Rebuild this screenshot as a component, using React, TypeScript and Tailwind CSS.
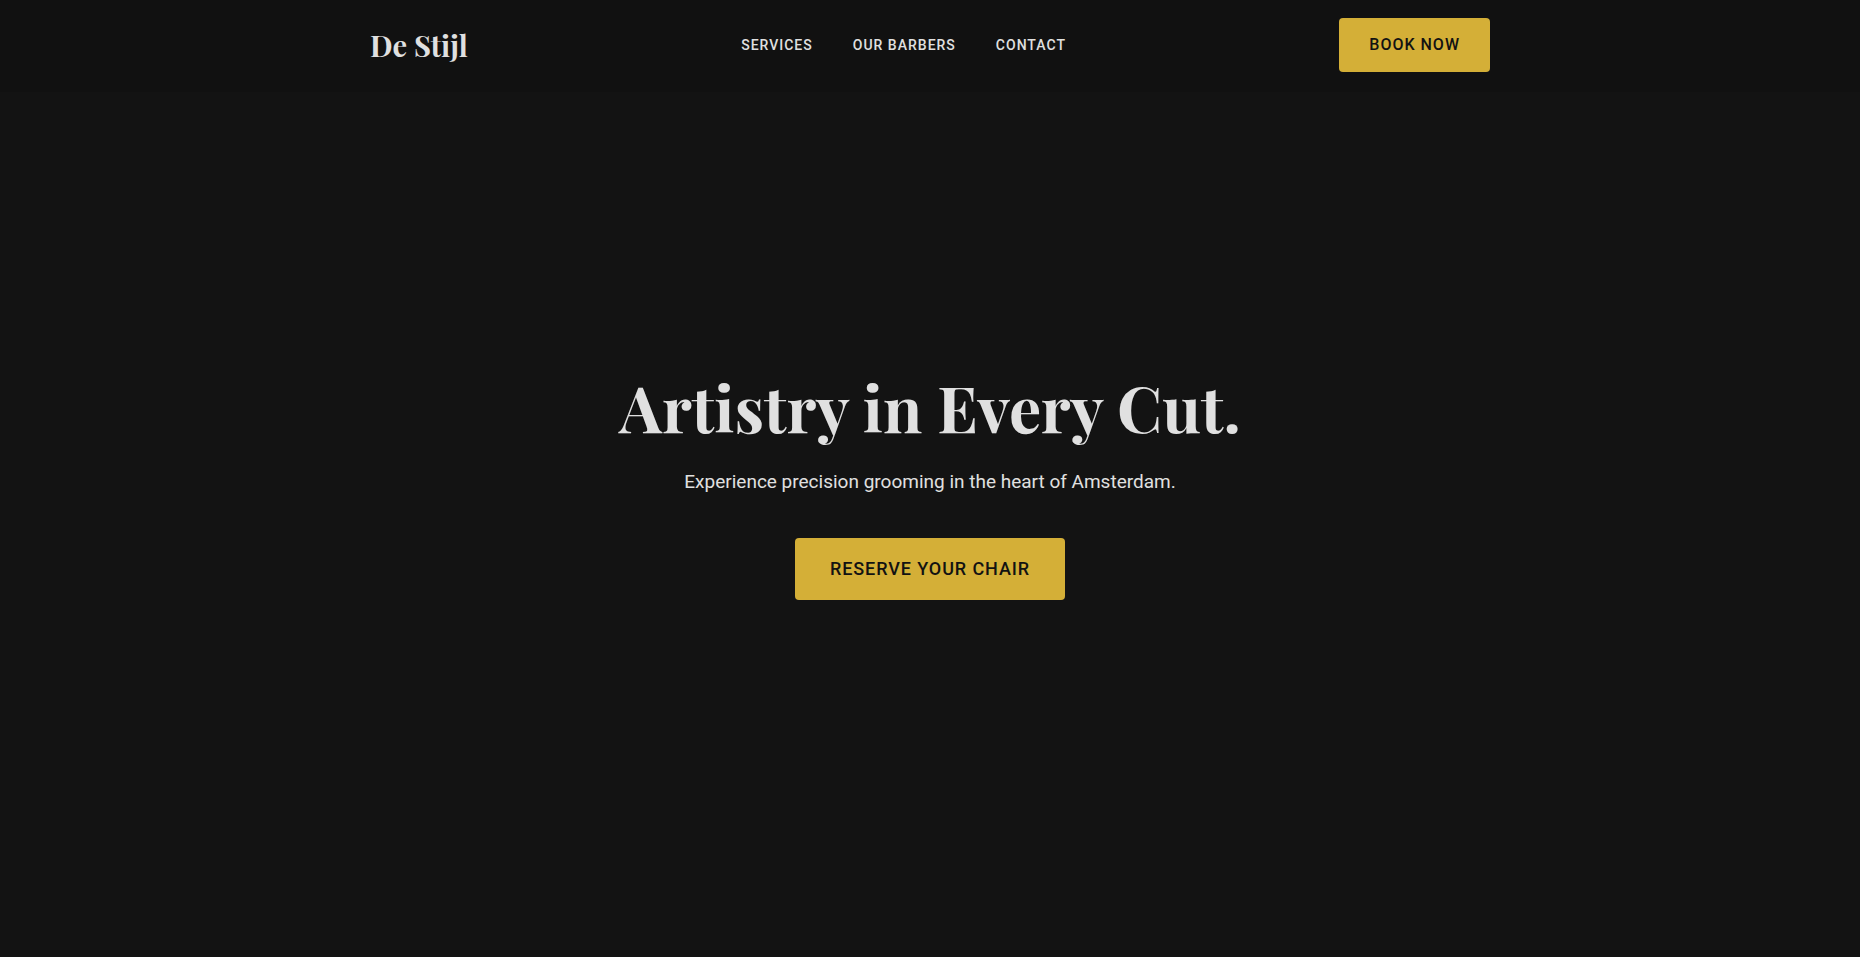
const links = [
  { label: "Services", href: "#services" },
  { label: "Our Barbers", href: "#barbers" },
  { label: "Contact", href: "#contact" },
];

function Header() {
  return (
    <header className="bg-[#111111] px-6 pt-[18px] pb-5">
      <div className="mx-auto flex max-w-[1120px] items-center justify-between">
        <a
          href="#home"
          className="font-['Playfair_Display','Liberation_Serif',serif] text-[29px] leading-9 font-bold"
        >
          De Stijl
        </a>
        <nav aria-label="Main" className="flex gap-10 text-sm font-medium tracking-[1px] uppercase">
          {links.map((link) => (
            <a key={link.href} href={link.href}>
              {link.label}
            </a>
          ))}
        </nav>
        <button
          type="button"
          className="rounded bg-[#d4af37] px-[30px] py-[15px] text-base font-medium tracking-[1px] text-[#121212] uppercase"
        >
          Book Now
        </button>
      </div>
    </header>
  );
}

function Hero() {
  return (
    <main className="flex flex-1 flex-col items-center justify-center px-6 pb-[82px] text-center">
      <h1 className="mb-[19px] font-['Playfair_Display','Liberation_Serif',serif] text-[64px] leading-[80px] font-bold">
        Artistry in Every Cut.
      </h1>
      <p className="mb-10 text-[19px] leading-8">
        Experience precision grooming in the heart of Amsterdam.
      </p>
      <button
        type="button"
        className="rounded bg-[#d4af37] px-[35px] py-[17px] text-lg font-medium tracking-wider text-[#121212] uppercase"
      >
        Reserve Your Chair
      </button>
    </main>
  );
}

export default function App() {
  return (
    <div className="flex min-h-screen flex-col bg-[#131313] font-['Roboto',sans-serif] text-[#e0e0e0]">
      <Header />
      <Hero />
    </div>
  );
}
